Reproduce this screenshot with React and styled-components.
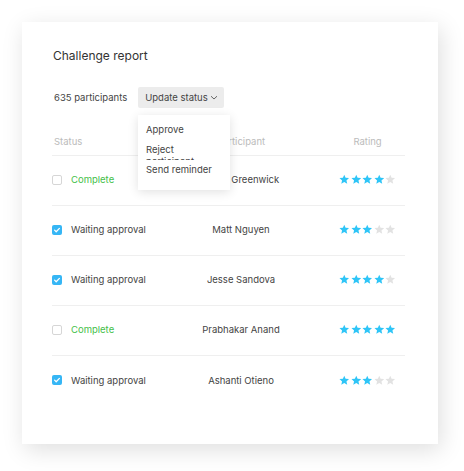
import React from "react";
import styled, { createGlobalStyle } from "styled-components";

const Global = createGlobalStyle`
  html, body { margin: 0; padding: 0; background: #fff; }
  body { font-family: Inter, "Noto Sans", sans-serif; -webkit-font-smoothing: antialiased; }
`;

const Page = styled.div`
  width: 464px;
  height: 471px;
  padding: 22px;
  box-sizing: border-box;
`;

const Card = styled.div`
  width: 416px;
  height: 422px;
  box-sizing: border-box;
  background: #fff;
  box-shadow: 3px 6px 22px rgba(0, 0, 0, 0.13);
  padding: 26px 33px 0 30px;
  display: flex;
  flex-direction: column;
`;

const Title = styled.h1`
  margin: 0 0 0 1px;
  font-size: 12px;
  line-height: 16px;
  font-weight: 400;
  color: #333;
`;

const Toolbar = styled.div`
  margin-top: 23px;
  display: flex;
  align-items: center;
  gap: 11px;
  position: relative;
`;

const Count = styled.span`
  font-size: 9.5px;
  color: #444;
  margin-left: 2px;
`;

const DropButton = styled.button`
  font: inherit;
  font-size: 9.5px;
  color: #444;
  background: #ececec;
  border: none;
  border-radius: 2px;
  height: 21px;
  padding: 0 6px 0 7px;
  display: flex;
  align-items: center;
  gap: 2px;
`;

const Menu = styled.div`
  position: absolute;
  top: 28px;
  left: 86px;
  width: 92px;
  background: #fff;
  box-shadow: 0 2px 10px rgba(0, 0, 0, 0.12);
  padding: 5px 0 10px;
  z-index: 2;
`;

const MenuItem = styled.div`
  height: 20px;
  overflow: hidden;
  padding: 4px 8px 0;
  box-sizing: border-box;
  font-size: 9.5px;
  line-height: 12px;
  color: #444;
  background: #fff;
`;

const Table = styled.div`
  margin-top: 24px;
  display: flex;
  flex-direction: column;
`;

const Row = styled.div`
  display: grid;
  grid-template-columns: 130px 118px 1fr;
  align-items: center;
  height: ${(p) => (p.$header ? "24px" : "50px")};
  border-bottom: ${(p) => (p.$last ? "none" : "1px solid #efefef")};
  box-sizing: border-box;
  font-size: 9.5px;
  color: ${(p) => (p.$header ? "#bbb" : "#444")};
  padding-bottom: ${(p) => (p.$header ? "4px" : "2px")};
`;

const StatusCell = styled.div`
  display: flex;
  align-items: center;
  gap: 9px;
`;

const HeaderStatus = styled.div`
  padding-left: 2px;
`;

const Center = styled.div`
  text-align: center;
`;

const RatingCell = styled.div`
  justify-self: end;
  width: 75px;
  display: flex;
  justify-content: center;
`;

const Box = styled.span`
  width: 10px;
  height: 10px;
  box-sizing: border-box;
  border-radius: 2px;
  border: ${(p) => (p.$checked ? "none" : "1px solid #d6d6d6")};
  background: ${(p) => (p.$checked ? "#36b6f5" : "#fff")};
  display: inline-flex;
  align-items: center;
  justify-content: center;
  flex: none;
`;

const StatusText = styled.span`
  color: ${(p) => (p.$complete ? "#45c04a" : "#444")};
`;

const Stars = styled.div`
  display: flex;
  gap: 1px;
`;

const Star = ({ on }) => (
  <svg width="10.5" height="10.5" viewBox="0 0 24 24">
    <path
      d="M12 1.5l3.1 7.2 7.8.7-5.9 5.2 1.8 7.7L12 18.2l-6.8 4.1 1.8-7.7-5.9-5.2 7.8-.7z"
      fill={on ? "#2ec5f7" : "#e2e2e2"}
    />
  </svg>
);

const Check = () => (
  <svg width="8" height="8" viewBox="0 0 10 10">
    <path d="M2 5.2l2 2 4-4.2" stroke="#fff" strokeWidth="1.6" fill="none" strokeLinecap="round" strokeLinejoin="round" />
  </svg>
);

const Chevron = () => (
  <svg width="8" height="5" viewBox="0 0 8 5">
    <path d="M1 1.2l3 2.8 3-2.8" stroke="#555" strokeWidth="0.9" fill="none" />
  </svg>
);

const rows = [
  { checked: false, status: "Complete", name: "Sarah Greenwick", rating: 4 },
  { checked: true, status: "Waiting approval", name: "Matt Nguyen", rating: 3 },
  { checked: true, status: "Waiting approval", name: "Jesse Sandova", rating: 4 },
  { checked: false, status: "Complete", name: "Prabhakar Anand", rating: 5 },
  { checked: true, status: "Waiting approval", name: "Ashanti Otieno", rating: 3 },
];

export default function App() {
  return (
    <>
      <Global />
      <Page>
        <Card>
          <Title>Challenge report</Title>
          <Toolbar>
            <Count>635 participants</Count>
            <DropButton>
              Update status <Chevron />
            </DropButton>
            <Menu>
              <MenuItem>Approve</MenuItem>
              <MenuItem>Reject participant</MenuItem>
              <MenuItem>Send reminder</MenuItem>
            </Menu>
          </Toolbar>
          <Table>
            <Row $header>
              <HeaderStatus>Status</HeaderStatus>
              <Center>Participant</Center>
              <RatingCell>Rating</RatingCell>
            </Row>
            {rows.map((r, i) => (
              <Row key={i} $last={i === rows.length - 1}>
                <StatusCell>
                  <Box $checked={r.checked}>{r.checked && <Check />}</Box>
                  <StatusText $complete={r.status === "Complete"}>{r.status}</StatusText>
                </StatusCell>
                <Center>{r.name}</Center>
                <RatingCell>
                  <Stars>
                    {[0, 1, 2, 3, 4].map((s) => (
                      <Star key={s} on={s < r.rating} />
                    ))}
                  </Stars>
                </RatingCell>
              </Row>
            ))}
          </Table>
        </Card>
      </Page>
    </>
  );
}
